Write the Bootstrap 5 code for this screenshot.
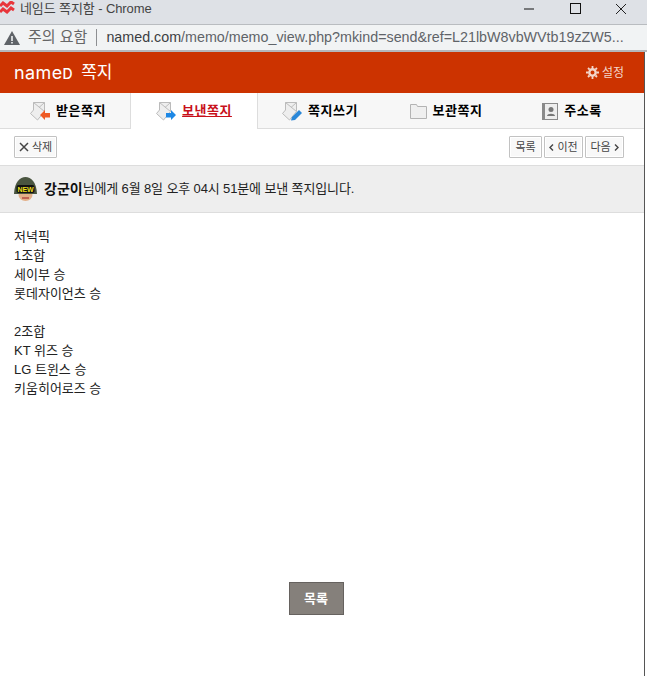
<!DOCTYPE html>
<html lang="ko">
<head>
<meta charset="UTF-8">
<title>네임드 쪽지함 - Chrome</title>
<link href="https://cdn.jsdelivr.net/npm/bootstrap@5.3.0/dist/css/bootstrap.min.css" rel="stylesheet">
<style>
    html, body { height: 100%; overflow: hidden; }
    body { background: #fff; font-family: "Liberation Sans", "Noto Sans CJK KR", sans-serif; font-size: 13px; color: #222; }
    .win-shell { height: 676px; width: 647px; display: flex; flex-direction: column; }
    .title-strip { height: 24px; background: #dee1e6; color: #444; font-size: 13px; }
    .title-strip .win-txt { margin-left: 5px; margin-top: -6px; letter-spacing: -.1px; }
    .title-strip > svg { margin-top: -8px; }
    .win-btns { margin-left: auto; padding-right: 3px; }
    .win-btns span { width: 46px; text-align: center; display: block; line-height: 0; margin-top: -7px; }
    .addr-strip { height: 28px; background: #f1f3f4; border-top: 1px solid #b9bcc0; border-bottom: 2px solid #b5b7ba; font-size: 14.3px; color: #5f6368; white-space: nowrap; overflow: hidden; }
    .addr-warn { color: #666; font-size: 15px; margin-left: 8px; margin-right: 8px; }
    .addr-sep { width: 1px; height: 17px; background: #8d8f92; margin: 0 9px 0 1px; }
    .addr-url b { font-weight: 400; color: #3c4043; }
    .page-wrap { flex: 1; width: 645px; border-right: 1px solid #555; display: flex; flex-direction: column; }
    .memo-head { height: 41px; background: #cc3300; color: #fff; padding: 0 20px 0 14px; }
    .memo-logo { font-family: Inter, sans-serif; font-size: 18px; font-weight: 400; letter-spacing: .4px; line-height: 1; }
    .memo-logo span { font-size: 14px; font-weight: 500; }
    .memo-title { font-size: 17px; margin-left: 8px; }
    .memo-set { margin-left: auto; color: #f3d6cb; font-size: 12px; gap: 3px; }
    .memo-tabs { height: 36px; background: #f7f7f7; border-bottom: 1px solid #ddd; flex-wrap: nowrap; padding-left: 5px; }
    .memo-tabs .nav-link { height: 36px; padding: 0; display: flex; align-items: center; justify-content: center; gap: 6px; color: #000; font-weight: 700; font-size: 13px; letter-spacing: .5px; border-radius: 0; }
    .memo-tabs .nav-item { width: 126px; flex: none; }
    .memo-tabs .tab-on .nav-link { background: #fff; color: #c8101a; text-decoration: underline; border-left: 1px solid #ddd; border-right: 1px solid #ddd; margin-left: -1px; margin-right: -1px; }
    .memo-bar { height: 36px; padding: 0 20px 0 14px; }
    .memo-btn { height: 22px; padding: 0; background: #f8f8f8; border: 1px solid #c2c2c2; border-radius: 1px; font-size: 11px; color: #444; box-shadow: inset 0 0 0 1px #fff; display: flex; align-items: center; justify-content: center; gap: 3px; }
    .btn-del { width: 43px; }
    .btn-list { width: 33px; }
    .btn-move { width: 39px; }
    .btn-group-gap { gap: 2px; }
    .info-strip { height: 48px; background: #eeeeee; border-top: 1px solid #ddd; border-bottom: 1px solid #ddd; padding-left: 14px; font-size: 13px; color: #222; letter-spacing: -.13px; }
    .info-strip b { color: #111; font-size: 14px; margin-left: 7px; letter-spacing: 0; }
    .memo-body { padding: 14px 14px 0; line-height: 19px; height: 369px; }
    .list-row { padding-right: 12px; }
    .list-btn { width: 55px; height: 33px; background: #85807b; border: 1px solid #66625f; border-radius: 0; color: #fff; font-weight: 700; font-size: 13px; padding: 0; }
    .list-btn:hover { background: #85807b; color: #fff; border-color: #66625f; }
</style>
</head>
<body>
<div class="win-shell">
    <div class="title-strip d-flex align-items-center">
        <svg width="15" height="15" viewBox="0 0 15 15"><path d="M0 5l3-3 4 3 4-4 3 2M0 11l3-3 4 3 4-4 3 2" fill="none" stroke="#e8353a" stroke-width="3"/></svg>
        <span class="win-txt">네임드 쪽지함 - Chrome</span>
        <div class="win-btns d-flex">
            <span><svg width="12" height="12" viewBox="0 0 12 12"><path d="M1 6h10" stroke="#111" stroke-width="1"/></svg></span>
            <span><svg width="11" height="11" viewBox="0 0 11 11"><rect x=".5" y=".5" width="10" height="10" fill="none" stroke="#111"/></svg></span>
            <span><svg width="12" height="12" viewBox="0 0 12 12"><path d="M1 1l10 10M11 1L1 11" stroke="#222" stroke-width="1"/></svg></span>
        </div>
    </div>
    <div class="addr-strip d-flex align-items-center">
        <svg class="ms-1" width="16" height="14" viewBox="0 0 16 14"><path d="M8 0l8 14H0z" fill="#5f6368"/><path d="M7.2 5h1.6v5H7.2zM7.2 11h1.6v1.5H7.2z" fill="#f1f3f4"/></svg>
        <span class="addr-warn">주의 요함</span>
        <span class="addr-sep"></span>
        <span class="addr-url"><b>named.com</b>/memo/memo_view.php?mkind=send&amp;ref=L21lbW8vbWVtb19zZW5...</span>
    </div>
    <div class="page-wrap">
        <div class="memo-head d-flex align-items-center">
            <span class="memo-logo">name<span>D</span></span>
            <span class="memo-title">쪽지</span>
            <span class="memo-set d-flex align-items-center">
                <svg width="13" height="13" viewBox="0 0 13 13"><circle cx="6.5" cy="6.5" r="3.2" fill="none" stroke="#f3d6cb" stroke-width="2.4"/><path d="M6.5 0v13M0 6.5h13M2 2l9 9M11 2l-9 9" stroke="#f3d6cb" stroke-width="1.8" stroke-dasharray="2.4 8.2 2.4"/></svg>
                설정
            </span>
        </div>
        <ul class="nav memo-tabs">
            <li class="nav-item"><a class="nav-link" href="#">
                <svg width="20" height="19" viewBox="0 0 20 19"><path d="M3.5.5h11v9l-7 8.5L.5 11.5 3.5 8z" fill="#eee" stroke="#bbb"/><path d="M3.5.5l11 9M14.5.5L9 5.5" stroke="#bbb" fill="none"/><path d="M10 13l5-5v3h5v4.500h-5V18z" fill="#ee5a24"/></svg>
                받은쪽지</a></li>
            <li class="nav-item tab-on"><a class="nav-link" href="#">
                <svg width="20" height="19" viewBox="0 0 20 19"><path d="M3.5.5h11v9l-7 8.5L.5 11.5 3.5 8z" fill="#eee" stroke="#bbb"/><path d="M3.5.5l11 9M14.5.5L9 5.5" stroke="#bbb" fill="none"/><path d="M20 13l-5-5v3h-5v4.500h5V18z" fill="#1e88e5"/></svg>
                보낸쪽지</a></li>
            <li class="nav-item"><a class="nav-link" href="#">
                <svg width="20" height="19" viewBox="0 0 20 19"><path d="M3.5.5h11v9l-7 8.5L.5 11.5 3.5 8z" fill="#eee" stroke="#bbb"/><path d="M3.5.5l11 9M14.5.5L9 5.5" stroke="#bbb" fill="none"/><path d="M10 15l7-7 3 3-7 7-4 .5z" fill="#2a87d8"/></svg>
                쪽지쓰기</a></li>
            <li class="nav-item"><a class="nav-link" href="#">
                <svg width="17" height="15" viewBox="0 0 17 15"><path d="M.5 14.500V.5h6l1 2h9v12z" fill="#efefef" stroke="#b3b3b3"/></svg>
                보관쪽지</a></li>
            <li class="nav-item"><a class="nav-link" href="#">
                <svg width="16" height="17" viewBox="0 0 16 17"><rect width="16" height="17" fill="#8a8a8a"/><rect x="3" y="1" width="12" height="15" fill="#eee"/><circle cx="9" cy="6.5" r="2.5" fill="#777"/><path d="M5 13c0-3 8-3 8 0z" fill="#777"/></svg>
                주소록</a></li>
        </ul>
        <div class="memo-bar d-flex align-items-center">
            <button type="button" class="memo-btn btn-del"><svg width="10" height="10" viewBox="0 0 10 10"><path d="M1 1l8 8M9 1L1 9" stroke="#444" stroke-width="1.5"/></svg>삭제</button>
            <div class="ms-auto d-flex btn-group-gap">
                <button type="button" class="memo-btn btn-list">목록</button>
                <button type="button" class="memo-btn btn-move"><svg width="5" height="7" viewBox="0 0 5 7"><path d="M4 .5L1 3.5 4 6.5" fill="none" stroke="#444" stroke-width="1.4"/></svg>이전</button>
                <button type="button" class="memo-btn btn-move"><span>다음</span><svg width="5" height="7" viewBox="0 0 5 7"><path d="M1 .5L4 3.5 1 6.5" fill="none" stroke="#444" stroke-width="1.4"/></svg></button>
            </div>
        </div>
        <div class="info-strip d-flex align-items-center">
            <svg width="23" height="24" viewBox="0 0 23 24"><ellipse cx="11.5" cy="18" rx="7" ry="6" fill="#e3b088"/><path d="M8 21h7" stroke="#a33" stroke-width="1.2"/><path d="M0 17C.5 5 6 0 11.5 0S22.500 5 23 17z" fill="#4a5540"/><rect x="2.5" y="8" width="18" height="8" rx="2" fill="#111"/><text x="11.5" y="14.500" text-anchor="middle" font-size="7" font-weight="700" fill="#ecdf1c" font-family="Liberation Sans">NEW</text></svg>
            <b>강군이</b><span>님에게 6월 8일 오후 04시 51분에 보낸 쪽지입니다.</span>
        </div>
        <div class="memo-body">
            저녁픽<br>
            1조합<br>
            세이부 승<br>
            롯데자이언츠 승<br>
            <br>
            2조합<br>
            KT 위즈 승<br>
            LG 트윈스 승<br>
            키움히어로즈 승
        </div>
        <div class="text-center list-row"><button type="button" class="btn list-btn">목록</button></div>
    </div>
</div>
<script src="https://cdn.jsdelivr.net/npm/bootstrap@5.3.0/dist/js/bootstrap.bundle.min.js"></script>
</body>
</html>
